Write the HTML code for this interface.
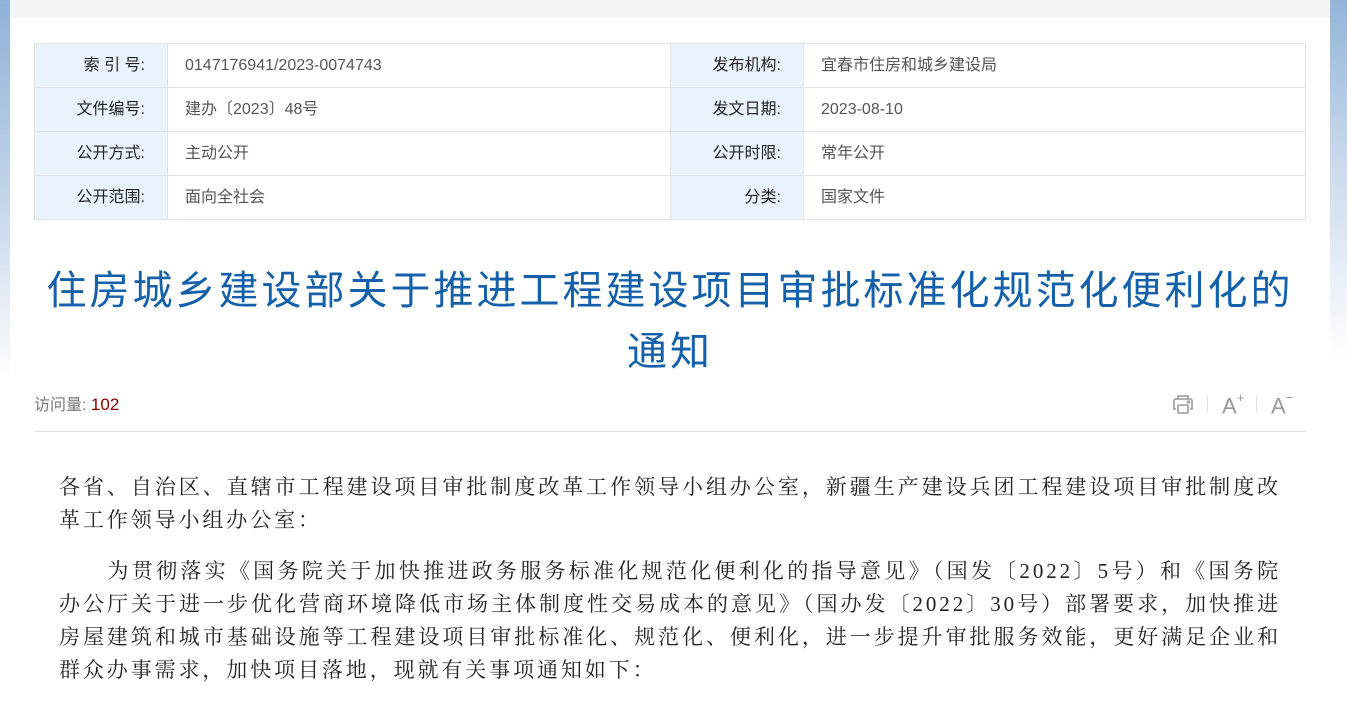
<!DOCTYPE html>
<html><head><meta charset="utf-8"><style>
*{margin:0;padding:0;box-sizing:border-box}
body{width:1347px;height:715px;overflow:hidden;background:#fff;position:relative;font-family:"Liberation Sans","Noto Sans CJK SC",sans-serif}
.sideL{position:absolute;left:0;top:0;width:10px;height:715px;background:linear-gradient(#8fb1d8 0,#c4d5ea 200px,#fff 380px)}
.sideR{position:absolute;right:0;top:0;width:17px;height:715px;background:linear-gradient(#93b4d9 0,#c6d7eb 150px,#fff 360px)}
.top{position:absolute;left:10px;top:0;width:1320px;height:18px;background:#f5f5f5}
table{position:absolute;left:34px;top:43px;width:1271px;border-collapse:collapse;font-size:16px;table-layout:fixed}
td{border:1px solid #e2e2e2;height:44px;padding:0;line-height:43px}
td.l{background:#e9f3fd;color:#222;text-align:right;padding-right:22px}
td.v{color:#555;padding-left:17px}
h1{position:absolute;left:30px;top:261px;width:1280px;text-align:center;font-weight:normal;font-size:40px;line-height:61px;color:#1560aa;letter-spacing:3px}
.visit{position:absolute;left:34px;top:391px;font-size:16px;color:#777}
.visit b{font-weight:normal;color:#8b0000;font-size:17px}
.hr{position:absolute;left:34px;top:431px;width:1272px;height:1px;background:#e0e0e0}
.body{position:absolute;left:59px;width:1222px;font-family:"Liberation Serif","Noto Serif CJK SC",serif;font-size:21px;color:#222;letter-spacing:2.9px}
.ln{height:33px;line-height:33px;white-space:nowrap;text-align:justify;text-align-last:justify;overflow:hidden}
.ln.e{text-align-last:left}
.ic{position:absolute;top:392px;color:#888}
</style></head><body>
<div class="sideL"></div><div class="sideR"></div><div class="top"></div>
<table>
<colgroup><col style="width:133px"><col style="width:503px"><col style="width:133px"><col style="width:502px"></colgroup>
<tr><td class="l">索 引 号:</td><td class="v">0147176941/2023-0074743</td><td class="l">发布机构:</td><td class="v">宜春市住房和城乡建设局</td></tr>
<tr><td class="l">文件编号:</td><td class="v">建办〔2023〕48号</td><td class="l">发文日期:</td><td class="v">2023-08-10</td></tr>
<tr><td class="l">公开方式:</td><td class="v">主动公开</td><td class="l">公开时限:</td><td class="v">常年公开</td></tr>
<tr><td class="l">公开范围:</td><td class="v">面向全社会</td><td class="l">分类:</td><td class="v">国家文件</td></tr>
</table>
<h1>住房城乡建设部关于推进工程建设项目审批标准化规范化便利化的<br>通知</h1>
<div class="visit">访问量:&nbsp;<b>102</b></div>
<svg class="ic" style="left:1171px" width="24" height="24" viewBox="0 0 24 24" fill="none" stroke="#999" stroke-width="1.6"><path d="M7 7V4h10v3M5 17H3v-8q0-2 2-2h14q2 0 2 2v8h-2"/><rect x="7" y="13" width="10" height="8" rx="1"/><circle cx="17.5" cy="10" r="0.8" fill="#999"/></svg>
<div style="position:absolute;left:1207px;top:397px;width:1px;height:14px;background:#ddd"></div>
<div class="ic" style="left:1222px;top:393px;font-size:22px;color:#999">A<sup style="font-size:13px;position:relative;top:-3px">+</sup></div>
<div style="position:absolute;left:1256px;top:397px;width:1px;height:14px;background:#ddd"></div>
<div class="ic" style="left:1271px;top:393px;font-size:22px;color:#999">A<sup style="font-size:13px;position:relative;top:-3px">−</sup></div>
<div class="hr"></div>
<div class="body" style="top:471px">
<div class="ln">各省、自治区、直辖市工程建设项目审批制度改革工作领导小组办公室，新疆生产建设兵团工程建设项目审批制度改</div>
<div class="ln e">革工作领导小组办公室：</div>
</div>
<div class="body" style="top:555px">
<div class="ln">　　为贯彻落实《国务院关于加快推进政务服务标准化规范化便利化的指导意见》（国发〔2022〕5号）和《国务院</div>
<div class="ln">办公厅关于进一步优化营商环境降低市场主体制度性交易成本的意见》（国办发〔2022〕30号）部署要求，加快推进</div>
<div class="ln">房屋建筑和城市基础设施等工程建设项目审批标准化、规范化、便利化，进一步提升审批服务效能，更好满足企业和</div>
<div class="ln e">群众办事需求，加快项目落地，现就有关事项通知如下：</div>
</div>
</body></html>
